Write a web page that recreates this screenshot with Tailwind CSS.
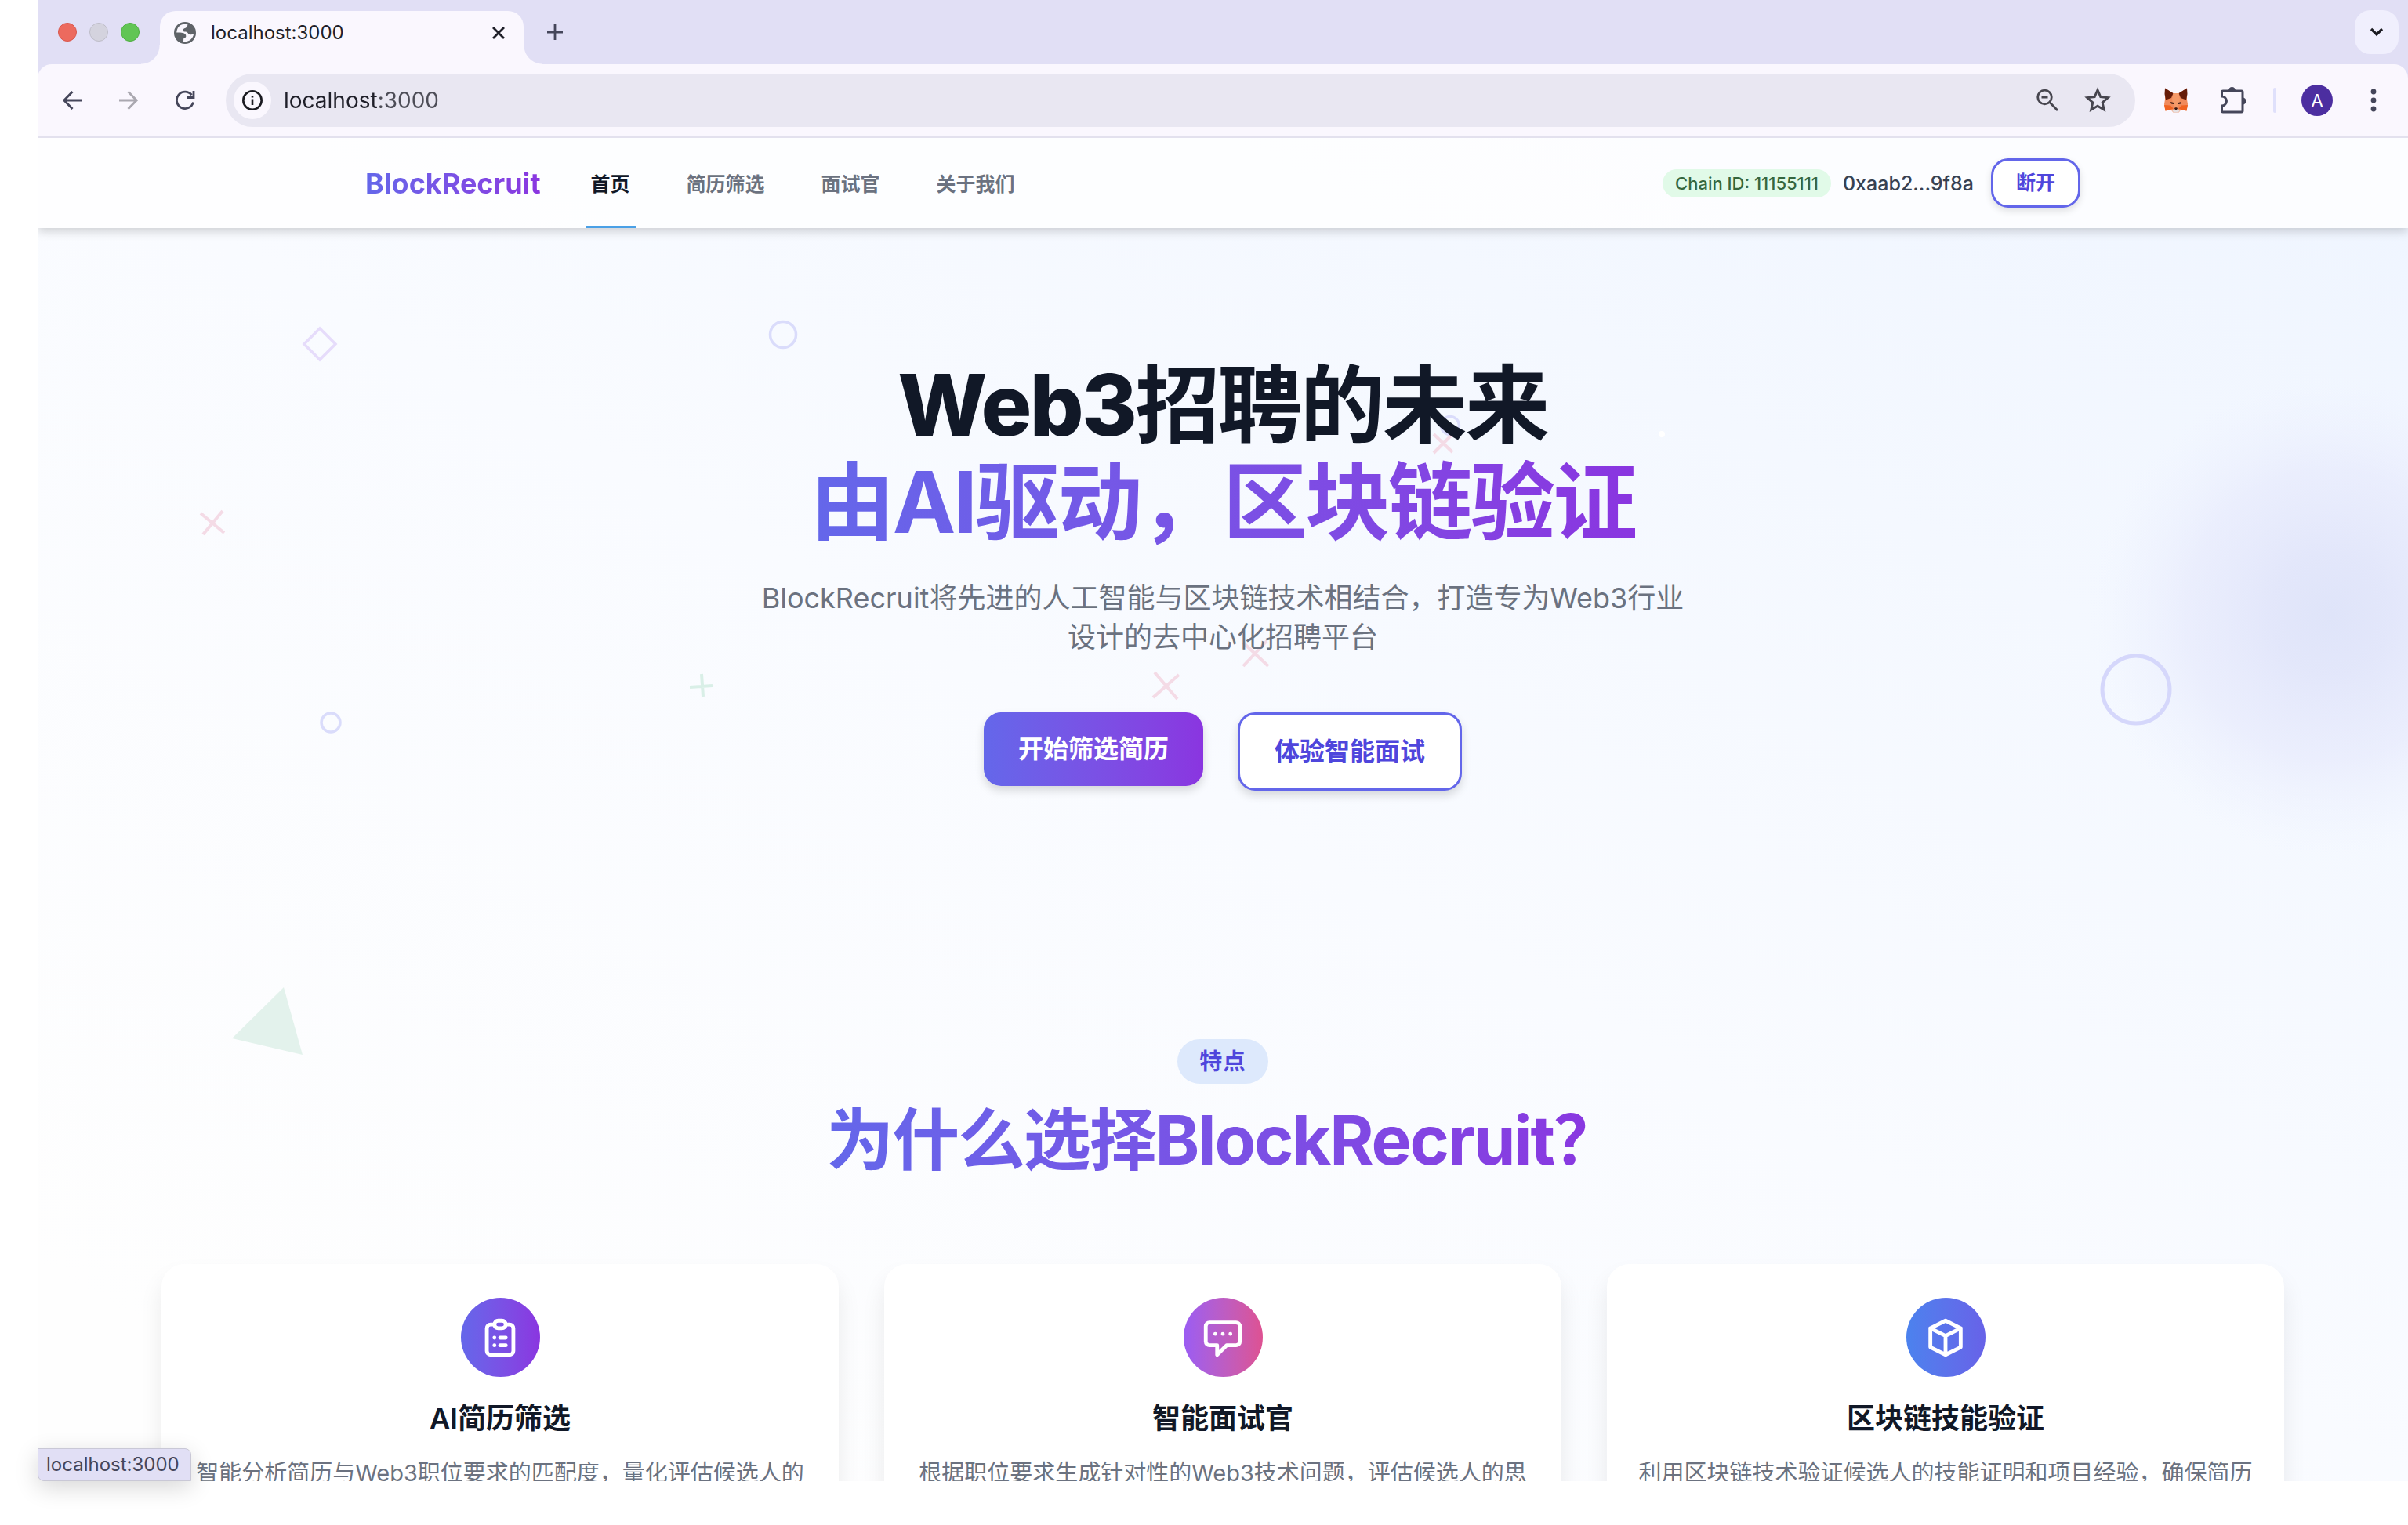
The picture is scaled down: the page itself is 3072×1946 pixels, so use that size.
<!DOCTYPE html>
<html lang="zh-CN">
<head>
<meta charset="utf-8">
<meta name="viewport" content="width=device-width, initial-scale=1">
<title>BlockRecruit</title>
<script src="https://cdn.jsdelivr.net/npm/@tailwindcss/browser@4"></script>
</head>
<body class="h-screen overflow-hidden bg-white pb-14 pl-12 font-['Inter','Noto_Sans_CJK_SC',sans-serif]">
<div class="relative flex h-full flex-col">

  <!-- Tab strip -->
  <div class="flex h-[82px] shrink-0 items-center bg-[#e1dff5] pl-[26px] pr-3">
    <div class="flex gap-4">
      <span class="size-6 rounded-full border border-[#d9574c] bg-[#ec6a5e]"></span>
      <span class="size-6 rounded-full border border-[#bfbec9] bg-[#d4d3de]"></span>
      <span class="size-6 rounded-full border border-[#4fae42] bg-[#61c554]"></span>
    </div>
    <div class="relative ml-[26px] flex h-[68px] w-[464px] items-center self-end rounded-t-[20px] bg-[#faf7fe] pl-[18px] pr-4">
      <span class="absolute bottom-0 -left-6 size-6 bg-[radial-gradient(circle_at_0_0,transparent_23px,#faf7fe_24px)]"></span>
      <span class="absolute bottom-0 -right-6 size-6 bg-[radial-gradient(circle_at_100%_0,transparent_23px,#faf7fe_24px)]"></span>
      <svg class="size-7 -translate-y-1.5" viewBox="0 0 28 28"><circle cx="14" cy="14" r="14" fill="#5f6368"/><path d="M3.200 13.500c3.600 0 7-.2 9 .8 1.800 1 3.300 1.600 3.100 4.200-.1 1.500-1.800 1.700-2.700 2.300-.8.6-.4 3-.6 4.300 5.800 1 12.400-3.300 13.100-9.900-2.100 1.400-4.800 1.500-6.300.4-1.200-.9-1.300-2.700-2.900-2.900-1.700-.3-3.700.3-4.300-1.200-.5-1.400.6-2.900 2.200-3.400 1.300-.4 2.200-.8 2.600-2 .3-1 .9-1.700 1.200-2.500C11.200.700 3.800 4.600 3.200 13.500z" fill="#faf7fe"/></svg>
      <span class="ml-[19px] -translate-y-1.5 text-[24px] leading-8 text-[#1f1f29]">localhost:3000</span>
      <button aria-label="关闭标签页" class="ml-auto grid size-8 -translate-y-1.5 place-items-center"><svg class="size-[18px]" viewBox="0 0 18 18" stroke="#1f1f29" stroke-width="2.800" fill="none"><path d="M2 2l14 14M16 2L2 16"/></svg></button>
    </div>
    <button aria-label="新标签页" class="ml-6 grid size-8 place-items-center"><svg class="size-5" viewBox="0 0 20 20" stroke="#45465a" stroke-width="2.800"><path d="M10 0v20M0 10h20"/></svg></button>
    <button aria-label="搜索标签页" class="ml-auto grid size-14 place-items-center rounded-[20px] bg-[#f0effd]"><svg class="h-3 w-[18px]" viewBox="0 0 18 12" stroke="#1b1b21" stroke-width="3.200" fill="none"><path d="M2 2l7 7 7-7"/></svg></button>
  </div>

  <!-- Toolbar -->
  <div class="shrink-0 bg-[#e1dff5]">
    <div class="flex h-[94px] items-center rounded-t-[18px] border-b-2 border-[#e3e1ee] bg-[#faf7fe] px-2">
      <button aria-label="后退" class="grid h-12 w-[72px] place-items-center"><svg class="size-6" viewBox="0 0 24 24" stroke="#45465a" stroke-width="2.800" fill="none"><path d="M24 12H2M12.500 1L1.800 12l10.700 11"/></svg></button>
      <button aria-label="前进" class="grid h-12 w-[72px] place-items-center"><svg class="size-6" viewBox="0 0 24 24" stroke="#aaa8b0" stroke-width="2.800" fill="none"><path d="M0 12h22M11.500 1l10.700 11-10.700 11"/></svg></button>
      <button aria-label="重新加载" class="grid h-12 w-[72px] place-items-center"><svg class="size-[26px]" viewBox="0 0 26 26" stroke="#45465a" stroke-width="2.800" fill="none"><path d="M23.500 15.500A10.700 10.700 0 1 1 21.500 6.200M24 1v8.500h-8.500"/></svg></button>
      <div class="ml-4 flex h-[68px] flex-1 items-center rounded-full bg-[#e9e7f2] pl-2.5 pr-4">
        <button aria-label="查看网站信息" class="grid size-12 place-items-center rounded-full bg-[#faf7fe]"><svg class="size-7" viewBox="0 0 28 28" fill="none" stroke="#1b1b21" stroke-width="2.600"><circle cx="14" cy="14" r="11.700"/><path d="M14 12.500v7.500M14 8v2.600"/></svg></button>
        <input aria-label="地址栏" value="localhost:3000" class="ml-4 w-0 flex-1 bg-[linear-gradient(90deg,#1f1f29_119px,#4d4d57_119px)] bg-clip-text text-[28px] leading-10 text-transparent">
        <button aria-label="缩放" class="grid h-12 w-16 place-items-center"><svg class="size-[30px]" viewBox="0 0 30 30" fill="none" stroke="#47464f" stroke-width="2.800"><circle cx="11.500" cy="11" r="8.800"/><path d="M17.800 17.500L28 28M7.500 11h8"/></svg></button>
        <button aria-label="收藏" class="grid h-12 w-16 place-items-center"><svg class="size-9" viewBox="0 0 24 24" fill="none" stroke="#47464f" stroke-width="1.900"><path d="M12 3.200l2.500 5.900 6.400.600-4.800 4.200 1.400 6.200-5.500-3.300-5.500 3.300 1.400-6.200-4.800-4.200 6.400-.600z"/></svg></button>
      </div>
      <button aria-label="MetaMask" class="ml-4 grid h-12 w-[72px] place-items-center"><svg class="h-8 w-[30px]" viewBox="0 0 30 32"><path d="M1 .500L11 7h8L29 .500V15l1 6-1.500 8.500-7-1.500-3 3.500h-7l-3-3.500-7 1.500L0 21l1-6z" fill="#f08a5b"/><path d="M1 .500L11.500 7 9 13l-7 2.500L.500 8zM29 .500L18.500 7 21 13l7 2.500L29.500 8z" fill="#661c09"/><path d="M0 22l8 .500 3.500 4L8 28l-6.500 1.500zM30 22l-8 .500-3.500 4L22 28l6.500 1.500z" fill="#f06321"/><path d="M11.500 7h7l1.500 8-2.500 10h-5L10 15z" fill="#f59a69"/><path d="M10 29l3-2h4l3 2-2 2.500h-6z" fill="#e6e2e4"/><path d="M8 18l4 1v2l-3-.500zM22 18l-4 1v2l3-.500zM13 26l2-1 2 1-1 2.500h-2z" fill="#3b1a14"/></svg></button>
      <button aria-label="扩展程序" class="grid h-12 w-[72px] place-items-center"><svg class="h-9 w-[34px]" viewBox="0 0 34 36"><path d="M5 6h23.500a1.500 1.500 0 0 1 1.500 1.500v24a1.500 1.500 0 0 1-1.500 1.500H5a1.500 1.500 0 0 1-1.500-1.500V25a6 6 0 0 0 0-12V7.500A1.500 1.500 0 0 1 5 6z" fill="none" stroke="#45465a" stroke-width="3"/><path d="M12 5.500a4.500 4.500 0 0 1 9 0zM30 14.500a4.500 4.500 0 0 1 0 9z" fill="#45465a"/></svg></button>
      <span class="mx-4 h-8 w-1 rounded-full bg-[#dfe0fb]"></span>
      <button aria-label="个人资料" class="grid h-12 w-[72px] place-items-center"><span class="grid size-10 place-items-center rounded-full bg-[#4c2ea0] text-[22px] leading-none text-white">A</span></button>
      <button aria-label="菜单" class="grid h-12 w-[72px] place-items-center"><svg class="h-[30px] w-2" viewBox="0 0 8 30" fill="#45465a"><circle cx="4" cy="4" r="3.400"/><circle cx="4" cy="15" r="3.400"/><circle cx="4" cy="26" r="3.400"/></svg></button>
    </div>
  </div>

  <!-- Page viewport -->
  <div class="relative min-h-0 flex-1 overflow-hidden bg-[linear-gradient(to_top_right,#fefefe_8%,#f9fbff_50%,#eff5ff_100%)]">

    <!-- Floating background shapes -->
    <svg class="absolute inset-x-0 top-0 w-full" viewBox="0 0 3024 1714" fill="none" stroke-width="3.500" aria-hidden="true">
      <defs><radialGradient id="glow"><stop offset="0" stop-color="#dfe4f9"/><stop offset=".25" stop-color="#e1e5fa" stop-opacity=".9"/><stop offset=".6" stop-color="#e6e9fc" stop-opacity=".65"/><stop offset=".85" stop-color="#edf1fe" stop-opacity=".35"/><stop offset="1" stop-color="#f2f6ff" stop-opacity="0"/></radialGradient></defs>
      <circle cx="2925" cy="608" r="310" fill="url(#glow)"/>
      <path d="M360 243l20 20-20 20-20-20z" stroke="#e6dcfb"/>
      <g stroke="#dadcfb"><circle cx="951" cy="251" r="16.500"/><circle cx="374" cy="746" r="12"/><circle cx="1802" cy="367" r="11.500"/></g>
      <g stroke="#f4dbe6" stroke-width="4"><path d="M208 479l30 25M236 476l-25 30M1781 378l24 23M1804 379l-23 23M1538 644l32 30M1568 642l-30 32M1425 682l29 34M1456 685l-33 29"/></g>
      <path d="M847 684l2 29M832 701l29-2" stroke="#d9efe7" stroke-width="4"/>
      <circle cx="2677" cy="704" r="43" stroke="#d5d7fb" stroke-width="5"/>
      <path d="M314 1084l-66 65 90 21z" fill="#e3f2ec"/>
      <circle cx="2072" cy="378" r="4" fill="#fff"/>
    </svg>

    <header class="relative bg-white/80 shadow-[0_4px_12px_rgba(0,0,0,0.180)]">
      <nav class="mx-auto flex h-[115px] max-w-[2304px] items-center px-[58px]">
        <a href="#" class="bg-gradient-to-r from-[#6467ea] to-[#8a35e0] bg-clip-text text-[36px] leading-[50px] font-bold text-transparent">BlockRecruit</a>
        <div class="ml-[57px] flex gap-[58px] self-stretch text-[25px] font-semibold text-[#6b7280]">
          <a href="#" class="flex items-center border-b-[3px] border-[#4aa0e6] px-[7px] pt-2 text-[#111827]">首页</a>
          <a href="#" class="flex items-center border-b-[3px] border-transparent px-[7px] pt-2">简历筛选</a>
          <a href="#" class="flex items-center border-b-[3px] border-transparent px-[7px] pt-2">面试官</a>
          <a href="#" class="flex items-center border-b-[3px] border-transparent px-[7px] pt-2">关于我们</a>
        </div>
        <div class="ml-auto flex items-center">
          <span class="rounded-full bg-[#e1fae8] px-4 text-[22px] leading-9 font-medium text-[#35663e]">Chain ID: 11155111</span>
          <span class="ml-[15px] text-[25px] leading-9 font-medium text-[#374151]">0xaab2...9f8a</span>
          <button class="ml-[22px] rounded-[22px] border-[3px] border-[#6366ea] bg-white px-[29px] text-[25px] leading-[57px] font-bold text-[#4f46dc] shadow-[0_4px_10px_rgba(0,0,0,0.120)]">断开</button>
        </div>
      </nav>
    </header>

    <main class="relative">
      <section class="flex flex-col items-center pt-[172px] text-center">
        <h1 class="flex flex-col items-center gap-4 text-[108px] leading-[108px] font-bold tracking-tight text-[#111827]">
          <span><span class="font-extrabold">Web3</span>招聘的未来</span>
          <span class="bg-gradient-to-r from-[#6467ea] to-[#8a35e0] bg-clip-text text-transparent">由AI驱动，区块链验证</span>
        </h1>
        <p class="mt-[43px] max-w-[1210px] text-[36px] leading-[50px] text-[#6b7280]">BlockRecruit将先进的人工智能与区块链技术相结合，打造专为Web3行业设计的去中心化招聘平台</p>
        <div class="mt-[71px] flex items-start gap-11">
          <button class="rounded-[22px] bg-gradient-to-r from-[#6467ea] to-[#8a35e0] px-11 text-[32px] leading-[94px] font-bold text-white shadow-[0_6px_12px_rgba(0,0,0,0.140)]">开始筛选简历</button>
          <button class="rounded-[22px] border-[3px] border-[#6366ea] bg-white px-11 text-[32px] leading-[94px] font-bold text-[#4f46dc] shadow-[0_6px_12px_rgba(0,0,0,0.140)]">体验智能面试</button>
        </div>
      </section>

      <section class="flex flex-col items-center px-[158px] pt-[317px]">
        <span class="rounded-full bg-[#dde9fc] px-7 text-[29px] leading-[57px] font-bold tracking-wide text-[#4f46dc]">特点</span>
        <h2 class="mt-7 bg-gradient-to-r from-[#6467ea] to-[#8a35e0] bg-clip-text text-[86px] leading-[88px] font-bold tracking-tight text-transparent">为什么选择BlockRecruit？</h2>
        <div class="mt-[114px] grid w-full grid-cols-3 gap-[58px] text-center">
          <article class="flex h-[420px] flex-col items-center rounded-[29px] bg-white px-10 pt-[43px] shadow-[0_18px_30px_rgba(0,0,0,0.080)]">
            <span class="grid size-[101px] place-items-center rounded-full bg-gradient-to-r from-[#6467ea] to-[#8a35e0]"><svg class="size-[58px]" viewBox="0 0 24 24" fill="none" stroke="#fff" stroke-width="2" stroke-linecap="round" stroke-linejoin="round"><path d="M9 5H7a2 2 0 00-2 2v12a2 2 0 002 2h10a2 2 0 002-2V7a2 2 0 00-2-2h-2M9 5a2 2 0 002 2h2a2 2 0 002-2M9 5a2 2 0 012-2h2a2 2 0 012 2m-3 7h3m-3 4h3m-6-4h.010M9 16h.010"/></svg></span>
            <h3 class="mt-7 text-[36px] leading-[50px] font-semibold text-[#111827]">AI简历筛选</h3>
            <p class="mt-[23px] text-[29px] leading-[44px] text-[#6b7280]">智能分析简历与Web3职位要求的匹配度，量化评估候选人的</p>
          </article>
          <article class="flex h-[420px] flex-col items-center rounded-[29px] bg-white px-10 pt-[43px] shadow-[0_18px_30px_rgba(0,0,0,0.080)]">
            <span class="grid size-[101px] place-items-center rounded-full bg-gradient-to-r from-[#9b5cf3] to-[#de5192]"><svg class="size-[58px]" viewBox="0 0 24 24" fill="none" stroke="#fff" stroke-width="2" stroke-linecap="round" stroke-linejoin="round"><path d="M8 10h.010M12 10h.010M16 10h.010M9 16H5a2 2 0 01-2-2V6a2 2 0 012-2h14a2 2 0 012 2v8a2 2 0 01-2 2h-5l-5 5v-5z"/></svg></span>
            <h3 class="mt-7 text-[36px] leading-[50px] font-semibold text-[#111827]">智能面试官</h3>
            <p class="mt-[23px] text-[29px] leading-[44px] text-[#6b7280]">根据职位要求生成针对性的Web3技术问题，评估候选人的思</p>
          </article>
          <article class="flex h-[420px] flex-col items-center rounded-[29px] bg-white px-10 pt-[43px] shadow-[0_18px_30px_rgba(0,0,0,0.080)]">
            <span class="grid size-[101px] place-items-center rounded-full bg-gradient-to-r from-[#4b82ee] to-[#6762e8]"><svg class="size-[58px]" viewBox="0 0 24 24" fill="none" stroke="#fff" stroke-width="2" stroke-linecap="round" stroke-linejoin="round"><path d="M20 7l-8-4-8 4m16 0l-8 4m8-4v10l-8 4m0-10L4 7m8 4v10M4 7v10l8 4"/></svg></span>
            <h3 class="mt-7 text-[36px] leading-[50px] font-semibold text-[#111827]">区块链技能验证</h3>
            <p class="mt-[23px] text-[29px] leading-[44px] text-[#6b7280]">利用区块链技术验证候选人的技能证明和项目经验，确保简历</p>
          </article>
        </div>
      </section>
    </main>
  </div>

  <!-- Link status bubble -->
  <div class="absolute bottom-0 left-0 rounded-tr-[8px] rounded-bl-[8px] border border-[#c9c8d6] bg-[#e1dff5] pr-3.5 pl-2.5 text-[24px] leading-10 text-[#45465a] shadow-[0_8px_30px_rgba(0,0,0,0.160)]">localhost:3000</div>
</div>
</body>
</html>
